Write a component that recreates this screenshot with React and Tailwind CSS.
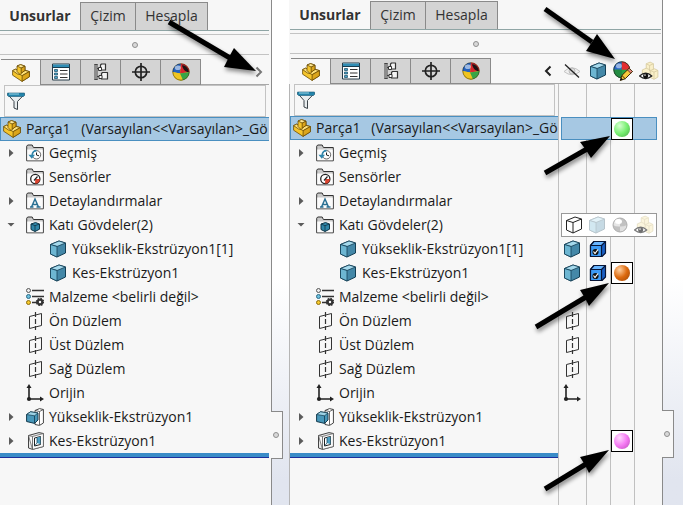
import React from 'react';
import clsx from 'clsx';

const Icon = ({ size = 'size-[18px]', className, children }) => (
  <svg viewBox="0 0 18 18" className={clsx(size, 'shrink-0', className)} fill="none" aria-hidden="true">
    {children}
  </svg>
);

const PartIcon = ({ className }) => (
  <Icon className={className}>
    <g stroke="#6b4d08" strokeWidth=".8" strokeLinejoin="round">
      <path d="M.6 6.600 3.500 5.200 5 5.800V2L8.600.600 13 2.200V6.200L17.400 7.600V12.800L10 17.400.6 11.200Z" fill="#f5c52c" />
      <path d="M5 2 8.600.600 13 2.200 9.200 4Z" fill="#ffe994" />
      <path d="M9.200 9.200 13 6.400 17.400 7.600 10.200 11.600 8 10.500Z" fill="#ffe27a" />
      <path d="M.6 6.600 3.500 5.200 5 5.800V7.500L8 10.500 5.500 10Z" fill="#ffe27a" />
      <path d="M9.200 4 13 2.200V6.400L9.200 9.200Z" fill="#dba51c" />
      <path d="M10.200 11.600 17.400 7.600V12.800L10 17.400Z" fill="#dba51c" />
    </g>
  </Icon>
);

const CubeIcon = ({ className }) => (
  <Icon className={className}>
    <g stroke="#143f55" strokeLinejoin="round">
      <path d="M1.500 4.500 10 1 16.500 3V13L8 17 1.500 14Z" fill="#4488a8" />
      <path d="M1.500 4.500 10 1 16.500 3 8 6.500Z" fill="#a5d9ec" strokeWidth=".8" />
      <path d="M1.500 4.500 8 6.500V17L1.500 14Z" fill="#6db6d2" strokeWidth=".8" />
    </g>
  </Icon>
);

const WireCubeIcon = () => (
  <Icon>
    <path d="M1.500 4.500 10 1 16.500 3V13L8 17 1.500 14ZM1.500 4.500 8 6.500 16.500 3M8 6.500V17" fill="#fff" stroke="#222" strokeLinejoin="round" />
  </Icon>
);

const CheckedCubeIcon = () => (
  <Icon>
    <g stroke="#071536" strokeWidth="1.200" strokeLinejoin="round">
      <path d="M1.500 5.500 5 1.500H16.500V13L13 16.500H1.500Z" fill="#1a5fc4" />
      <path d="M1.500 5.500 5 1.500H16.500L12.500 5.500Z" fill="#69b5ff" />
      <path d="M1.500 5.500H12.500V16.500H1.500Z" fill="#3d9af5" />
    </g>
    <circle cx="6.500" cy="12" r="3.100" fill="#111" />
    <path d="m4.500 11.500 1.500 2 3-4" stroke="#fff" strokeWidth="1.200" />
  </Icon>
);

const ListIcon = () => (
  <Icon>
    <path d="M.500 1h17v16H.500Z" fill="#fff" stroke="#263c4a" />
    <path d="M1 1.500h16v2.500H1Z" fill="#2f8db5" />
    <path d="M.500 4.500h17" stroke="#173b4e" />
    <path d="M2.500 6.500h3v2h-3ZM2.500 10h3v2h-3ZM2.500 13.500h3v2h-3Z" fill="#4aa4c8" stroke="#174761" strokeWidth=".7" />
    <path d="M8 7.500h7.500M8 11h7.500M8 14.500h7.500" stroke="#333" />
  </Icon>
);

const ConfigIcon = () => (
  <Icon>
    <path d="M3 1v16M5 1v16M2.500 1.500h3M2.500 16.500h3M5 5.500h4M5 13.500h4" stroke="#444" />
    <path d="M8.500 2 9.500 1H13.500V7H8.500ZM9.500 10.500 10.500 9.500H15.500V16H9.500Z" fill="#f4f4f4" stroke="#333" strokeWidth="1.200" strokeLinejoin="round" />
    <path d="M6.500 4.500h3v3h-3ZM7 12.500h3v3H7Z" fill="#fff" stroke="#333" />
  </Icon>
);

const TargetIcon = () => (
  <Icon>
    <circle cx="9" cy="9" r="5.700" stroke="#222" strokeWidth="1.700" />
    <path d="M9 0v18M0 9h18" stroke="#222" strokeWidth="1.700" />
  </Icon>
);

const AppearanceIcon = () => (
  <Icon>
    <circle cx="9" cy="9" r="8.500" fill="#f1c51e" />
    <path d="M9 .500A8.500 8.500 0 0 0 .500 9L8 10.500Z" fill="#2563bd" />
    <path d="M9 .500A8.500 8.500 0 0 1 17.500 9L8 10.500Z" fill="#d8262e" />
    <path d="M.500 9A8.500 8.500 0 0 0 8 17.400V10.500Z" fill="#f1c51e" />
    <path d="M8 10.500 17.500 9A8.500 8.500 0 0 1 8 17.400Z" fill="#37a545" />
    <path d="M8 10.500 11 17.200A8.500 8.500 0 0 1 2 14Z" fill="#f1c51e" />
    <circle cx="9" cy="9" r="8.200" stroke="#222" strokeOpacity=".65" strokeWidth=".7" />
    <ellipse cx="5.800" cy="4.800" rx="3" ry="2.300" fill="#fff" fillOpacity=".55" />
    <path d="M10 2.500C12.500 1.500 16.500 5 16.800 9 14 9.500 11 6.500 10 2.500Z" fill="#1d1415" />
  </Icon>
);

const EditAppearanceIcon = () => (
  <Icon size="size-5">
    <g transform="scale(.88)">
      <circle cx="9" cy="9" r="8.500" fill="#27a343" />
      <path d="M9 .500A8.500 8.500 0 0 0 .500 9H9Z" fill="#2a68c8" />
      <path d="M9 .500A8.500 8.500 0 0 1 17.500 9H9Z" fill="#e22c31" />
      <path d="M.500 9A8.500 8.500 0 0 0 9 17.500V9Z" fill="#238b42" />
      <circle cx="9" cy="9" r="8.200" stroke="#222" strokeWidth=".7" />
      <ellipse cx="6" cy="5" rx="3" ry="2.500" fill="#fff" fillOpacity=".5" />
    </g>
    <path d="M6.500 17.500 8 13 14.500 6.500 17.500 9.500 11 16Z" fill="#f7c93c" stroke="#3b2a05" strokeWidth=".9" />
    <path d="M6.500 17.500 7.300 15 9 16.600Z" fill="#111" />
    <path d="m8 13 3 3" stroke="#3b2a05" strokeWidth=".9" />
    <path d="m13 8 3 3 1.500-1.500-3-3Z" fill="#e88683" stroke="#3b2a05" strokeWidth=".7" />
  </Icon>
);

const GrayBallIcon = () => (
  <Icon className="opacity-60">
    <circle cx="9" cy="9" r="7" fill="#999" />
    <path d="M9 2A7 7 0 0 0 2 9Q5 11 9 10.500Z" fill="#d5d5d5" />
    <path d="M9 10.500Q13 10.500 16 9A7 7 0 0 1 9 16Z" fill="#ccc" />
    <circle cx="9" cy="9" r="7" stroke="#777" />
    <ellipse cx="7.500" cy="5.500" rx="3.500" ry="2.500" fill="#fff" />
  </Icon>
);

const HiddenIcon = () => (
  <Icon>
    <path d="M1 9.500Q9 2 17 9.500 9 16 1 9.500Z" fill="#f0f0f0" stroke="#c4c4c4" />
    <circle cx="9" cy="9" r="3" fill="#ddd" stroke="#bbb" />
    <path d="m2 2.500 14 13" stroke="#222" strokeWidth="1.300" />
  </Icon>
);

const TransparencyIcon = () => (
  <Icon size="size-5">
    <g fill="#faf0c8" stroke="#d8ccA4" strokeWidth=".8" strokeLinejoin="round">
      <path d="M6.500 2.500 10 1 13 2.500V8L9.500 9.500 6.500 8Z" />
      <path d="M10.500 8.500 14 7 17 8.500V14.500L13.500 16.500 10.500 15Z" />
      <path d="M3 8 6.500 6.500 10 8V14H3Z" />
      <path d="m6.500 2.500 3 1.500 3.500-1.500M9.500 4v5M10.500 8.500l3 1.500 3.500-1.500M13.500 10v6" />
    </g>
    <path d="M.500 13.500Q6 8.500 11.500 13.500 6 18 .500 13.500Z" fill="#fff" stroke="#222" strokeWidth="1.100" />
    <circle cx="6" cy="13.300" r="2.300" fill="#111" />
    <circle cx="5.400" cy="12.700" r=".7" fill="#fff" />
  </Icon>
);

const FunnelIcon = () => (
  <Icon>
    <path d="M.800 2.500 7 9.500V16l3.500 1.500v-8l6.700-7Z" fill="#e9edef" stroke="#3b4348" strokeLinejoin="round" />
    <path d="M.500 1h17v2.500l-1 1h-15l-1-1Z" fill="#2384ab" stroke="#185873" strokeWidth=".6" />
    <path d="M2 2h10" stroke="#9bd5e8" />
  </Icon>
);

const Folder = ({ children }) => (
  <Icon>
    <path d="M.700 16.800V2.200L1.700 1H6.200L7.400 3.500H17.300V16.800Z" fill="#c9c9c9" stroke="#333" />
    <path d="M1.200 5.500h15.600v10.800H1.200Z" fill="#fbfbfb" />
    {children}
  </Icon>
);

const HistoryIcon = () => (
  <Folder>
    <circle cx="10.500" cy="10.800" r="4.200" fill="#fff" stroke="#666" />
    <path d="M10.500 8.500v2.500l2.500.800" stroke="#222" />
    <path d="M10.500 6.600A4.200 4.200 0 0 0 6.300 10.800" stroke="#2f86ad" strokeWidth="1.800" />
    <path d="M2.500 10.800H9L5.800 14.800Z" fill="#2f86ad" />
  </Folder>
);

const SensorIcon = () => (
  <Folder>
    <circle cx="9.300" cy="11" r="4.600" fill="#fff" stroke="#222" strokeWidth="1.300" />
    <path d="M9.300 11h4.700a4.600 4.600 0 0 1-5 4.600Z" fill="#d9412c" />
    <path d="m8 12.500 3.500-4" stroke="#222" strokeWidth="1.200" />
  </Folder>
);

const AnnotationIcon = () => (
  <Folder>
    <path d="M5.500 15 9 7l3.500 8M6.500 12.500h5M4 15h3.500M10.500 15h4" stroke="#286f92" strokeWidth="1.500" />
  </Folder>
);

const BodiesIcon = () => (
  <Folder>
    <path d="M5 8 9.500 6.500 13.500 8V13.200L9 15.500 5 13.500Z" fill="#2f86a8" stroke="#0f3546" />
    <path d="m5 8 4 1.700L13.500 8M9 9.500V15.500" stroke="#0f3546" strokeWidth=".8" />
  </Folder>
);

const MaterialIcon = () => (
  <Icon>
    <path d="M6 2.500h12M6 8.500h12M6 14.500h5" stroke="#333" strokeWidth="1.600" />
    <circle cx="2.500" cy="2.500" r="2" fill="#eee" stroke="#555" />
    <circle cx="2.500" cy="8.500" r="2" fill="#6cc0de" stroke="#2c6b85" />
    <circle cx="2.500" cy="14.500" r="2" fill="#f7c92a" stroke="#8c6c0d" />
    <circle cx="14" cy="14" r="2.300" stroke="#333" strokeWidth="2.200" />
    <circle cx="14" cy="14" r="3.500" stroke="#333" strokeWidth="1.400" strokeDasharray="1.400 1.350" />
  </Icon>
);

const PlaneIcon = () => (
  <Icon>
    <path d="M3.500 4.500 15.500 1.500V13.500L3.500 16.500Z" stroke="#333" />
    <path d="M9.500 0v18" stroke="#333" strokeWidth="1.200" strokeDasharray="5 2" />
  </Icon>
);

const OriginIcon = () => (
  <Icon>
    <path d="M3 3v12h13" stroke="#222" strokeWidth="1.600" />
    <path d="M.5 4 3 0 5.500 4ZM14 12.500l4 2.500-4 2.500Z" fill="#222" />
    <circle cx="3" cy="15" r="2.100" fill="#222" />
  </Icon>
);

const ExtrudeIcon = () => (
  <Icon>
    <path d="M9 2.500 13.500.6 17.400 1.500V15L13.500 17.400 9 16.500Z" fill="#fff" stroke="#444" strokeLinejoin="round" />
    <path d="M13.500 3.500v13.500M9 2.500l4.500 1 3.900-2" stroke="#444" strokeWidth=".8" />
    <path d="M.6 6.500 4.500 3.800 12 5V12L8.500 15.400.6 13.500Z" fill="#4797b9" stroke="#12394c" strokeLinejoin="round" />
    <path d="M.6 6.500 4.500 3.800 12 5 8.500 7.800Z" fill="#9dd3e6" stroke="#12394c" strokeWidth=".7" />
    <path d="M8.500 7.800V15.400" stroke="#12394c" strokeWidth=".8" />
  </Icon>
);

const CutIcon = () => (
  <Icon>
    <path d="M2.500 3.500 13 .6 17.400 1.500V14.500L6.500 17.400 2.500 16Z" fill="#e8e8e8" stroke="#444" strokeLinejoin="round" />
    <path d="M2.500 3.500 6.500 4.500 17.400 1.500V14.500L6.500 17.400Z" fill="#fafafa" stroke="#555" strokeWidth=".7" />
    <path d="M6.500 4.500V17.400" stroke="#555" strokeWidth=".8" />
    <path d="M8.500 6 14.500 4.500V12.500L8.500 14Z" fill="#fff" stroke="#222" />
    <path d="M11 5.500 14.500 4.700V12.300L11 11Z" fill="#4b9fc4" />
    <path d="M8.500 14 11 11V5.500" stroke="#174b66" strokeWidth=".8" />
  </Icon>
);

const rows = [
  { label: 'Geçmiş', icon: HistoryIcon, toggle: 'closed' },
  { label: 'Sensörler', icon: SensorIcon },
  { label: 'Detaylandırmalar', icon: AnnotationIcon, toggle: 'closed' },
  { label: 'Katı Gövdeler(2)', icon: BodiesIcon, toggle: 'open' },
  { label: 'Yükseklik-Ekstrüzyon1[1]', icon: CubeIcon, child: true, display: CubeIcon, mode: true },
  { label: 'Kes-Ekstrüzyon1', icon: CubeIcon, child: true, display: CubeIcon, mode: true, color: 'orange' },
  { label: 'Malzeme <belirli değil>', icon: MaterialIcon },
  { label: 'Ön Düzlem', icon: PlaneIcon, display: PlaneIcon },
  { label: 'Üst Düzlem', icon: PlaneIcon, display: PlaneIcon },
  { label: 'Sağ Düzlem', icon: PlaneIcon, display: PlaneIcon },
  { label: 'Orijin', icon: OriginIcon, display: OriginIcon },
  { label: 'Yükseklik-Ekstrüzyon1', icon: ExtrudeIcon, toggle: 'closed' },
  { label: 'Kes-Ekstrüzyon1', icon: CutIcon, toggle: 'closed', color: 'pink' },
];

const swatches = {
  green: 'from-[#d5ffd0] via-[#78ef72] to-[#4aa846]',
  orange: 'from-[#ffd0a0] via-[#dc690e] to-[#9a4404]',
  pink: 'from-[#ffdcff] via-[#f57af3] to-[#b84bb6]',
};

const Swatch = ({ color }) => (
  <button aria-label={color} className="flex size-[22px] shrink-0 items-center justify-center border border-black bg-white">
    <span className={clsx('size-4 rounded-full bg-radial-[at_35%_30%]', swatches[color])} />
  </button>
);

const Toggle = ({ state }) => (
  <span className={clsx('flex w-5 shrink-0', state === 'open' ? 'pl-px' : 'pl-[3px]')}>
    {state && (
      <svg viewBox="0 0 8 8" className="size-2" aria-hidden="true">
        <path d={state === 'open' ? 'M.5 2h7L4 5.500Z' : 'M0 0 4.500 4 0 8Z'} fill="#5b5b5b" />
      </svg>
    )}
  </span>
);

const TreeRow = ({ row }) => {
  const RowIcon = row.icon;
  return (
    <li>
      <button className={clsx('flex h-6 w-full items-center whitespace-nowrap', row.child ? 'pl-[49px]' : 'pl-[6px]')}>
        {!row.child && <Toggle state={row.toggle} />}
        <RowIcon />
        <span className="pl-[5px]">{row.label}</span>
      </button>
    </li>
  );
};

const Tree = () => (
  <>
    <ul>
      {rows.map((row, i) => <TreeRow key={i} row={row} />)}
    </ul>
    <div className="h-[5px] border-b border-[#1d2f9c] bg-[#3a8cc8]" />
  </>
);

const RootRow = () => (
  <button className="flex h-6 w-full items-center border-y border-l border-[#4a8fc0] bg-[#a6c8e3] pl-[2px] whitespace-pre">
    <PartIcon />
    <span className="pl-[5px]">{'Parça1   (Varsayılan<<Varsayılan>_Gö'}</span>
  </button>
);

const Filter = () => (
  <label className="mr-[3px] ml-1 flex h-8 items-center border border-[#c3c3c3] pl-[2px]">
    <FunnelIcon />
    <input aria-label="Filter" className="ml-1 h-6 w-full min-w-0 bg-transparent outline-none" />
  </label>
);

const RibbonTabs = () => (
  <div className="flex h-[29px] border-b border-[#8fa5a5]">
    <button className="w-20 shrink-0 pb-px font-bold text-[#333]">Unsurlar</button>
    <button className="w-14 shrink-0 border border-b-0 border-[#8a8a8a] bg-[#d4d4d4] pb-px text-[#333]">Çizim</button>
    <button className="w-[72px] shrink-0 border border-b-0 border-l-0 border-[#8a8a8a] bg-[#d4d4d4] pb-px text-[#333]">Hesapla</button>
  </div>
);

const Dot = () => <span className="size-[6px] rounded-full border border-[#8f8f8f] bg-[#d8d8d8]" />;

const Splitter = () => (
  <div className="mt-[3px] flex h-[21px] items-center justify-center border-y border-[#c3c3c3]">
    <Dot />
  </div>
);

const managerTabs = [
  { name: 'Part', icon: PartIcon },
  { name: 'Properties', icon: ListIcon },
  { name: 'Configurations', icon: ConfigIcon },
  { name: 'Dimensions', icon: TargetIcon },
  { name: 'Appearances', icon: AppearanceIcon },
];

const ManagerBar = ({ children }) => (
  <div className="mt-1 flex h-[26px] pl-px">
    {managerTabs.map(({ name, icon: TabIcon }, i) => (
      <button
        key={name}
        aria-label={name}
        className={clsx(
          'flex w-10 shrink-0 items-center justify-center border-t border-r border-[#8a8a8a]',
          i > 0 && 'border-b bg-[#d4d4d4]'
        )}
      >
        <TabIcon />
      </button>
    ))}
    <div className="flex flex-1 items-center justify-end border-b border-[#a8a8a8]">{children}</div>
  </div>
);

const Chevron = ({ left }) => (
  <button aria-label={left ? 'Collapse' : 'Expand'}>
    <svg viewBox="0 0 8 12" className="h-3 w-2" fill="none">
      <path d={left ? 'M6.500 1.500 2 6 6.500 10.500' : 'M1.500 1.500 6 6 1.500 10.500'} stroke={left ? '#222' : '#777'} strokeWidth="2" />
    </svg>
  </button>
);

const Canvas = ({ className }) => (
  <div className={clsx('shrink-0 border-l border-[#8a8a8a] bg-linear-to-b from-white from-55% to-[#e1e5ef] to-95%', className)}>
    <button aria-label="Resize panel" className="-ml-px flex h-12 w-3 items-center justify-center border border-l-0 border-[#8a8a8a] bg-[#f7f7f7] pr-px">
      <Dot />
    </button>
  </div>
);

// Cells share the widths of the four display pane columns
const columns = ['w-7', 'w-6', 'w-6', 'w-7'];

const DisplayRow = ({ row }) => {
  const DisplayIcon = row.display;
  return (
    <div className="flex h-6 items-center">
      <div className={clsx(columns[0], 'flex shrink-0 justify-center')}>{DisplayIcon && <DisplayIcon />}</div>
      <div className={clsx(columns[1], 'flex shrink-0 justify-center')}>{row.mode && <CheckedCubeIcon />}</div>
      <div className={clsx(columns[2], 'flex shrink-0 justify-center')}>{row.color && <Swatch color={row.color} />}</div>
    </div>
  );
};

const DisplayPane = () => (
  <div className="relative w-[103px] shrink-0">
    <div className="absolute inset-0 flex">
      {columns.map((width, i) => (
        <div key={i} className={clsx(width, 'border-l border-[#c0c0c0]', i < 3 && 'shrink-0')} />
      ))}
    </div>
    <div className="relative pt-[33px]">
      <div className="mr-1 ml-[3px] flex h-[23px] items-center justify-center border border-[#4a8fc0] bg-[#a6c8e3] pl-[26px]">
        <Swatch color="green" />
      </div>
      <div className="pt-px">
        {rows.map((row, i) =>
          row.toggle === 'open' ? (
            <div key={i} className="mr-1 ml-[3px] flex h-6 items-center justify-around border border-[#999] bg-white">
              <WireCubeIcon />
              <CubeIcon className="opacity-30" />
              <GrayBallIcon />
              <span className="opacity-60"><TransparencyIcon /></span>
            </div>
          ) : (
            <DisplayRow key={i} row={row} />
          )
        )}
      </div>
    </div>
  </div>
);

const arrows = [
  { tail: [169, 22], neck: [230, 58], head: '234,48 256,71 224,67 229,57' },
  { tail: [545, 9], neck: [592, 42], head: '597,34 615,59 586,51 592,42' },
  { tail: [545, 173], neck: [587, 149], head: '580,142 610,136 591,158 586,150' },
  { tail: [536, 327], neck: [586, 297], head: '580,290 609,283 589,306 585,298' },
  { tail: [545, 489], neck: [586, 464], head: '580,457 609,450 589,473 585,465' },
];

const Arrows = () => (
  <svg className="pointer-events-none absolute top-0 left-0 h-[505px] w-[683px] drop-shadow-[1px_3px_2px_rgba(0,0,0,0.45)]" viewBox="0 0 683 505" aria-hidden="true">
    {arrows.map(({ tail, neck, head }) => (
      <g key={head}>
        <line x1={tail[0]} y1={tail[1]} x2={neck[0]} y2={neck[1]} stroke="#000" strokeWidth="5" />
        <polygon points={head} />
      </g>
    ))}
  </svg>
);

export default function App() {
  return (
    <main className="relative flex min-h-screen overflow-hidden bg-white font-['Open_Sans','Noto_Sans',sans-serif] text-[14px] leading-5 text-[#1a1a1a]">
      <section className="flex min-w-0 flex-[289]">
        <div className="min-w-0 flex-1 overflow-hidden bg-[#f7f7f7] pt-[2px] pr-[2px]">
          <RibbonTabs />
          <Splitter />
          <ManagerBar>
            <span className="flex pr-[6px]"><Chevron /></span>
          </ManagerBar>
          <Filter />
          <RootRow />
          <Tree />
        </div>
        <Canvas className="w-[18px] pt-[411px]" />
      </section>

      <section className="flex min-w-0 flex-[394]">
        <div className="flex min-w-0 flex-1 flex-col bg-[#f7f7f7] pt-px pr-px">
          <div className="pl-px">
            <RibbonTabs />
            <Splitter />
            <ManagerBar>
              <Chevron left />
              <button aria-label="Hide/Show" className="ml-[11px]"><HiddenIcon /></button>
              <button aria-label="Display mode" className="ml-2"><CubeIcon /></button>
              <button aria-label="Appearance" className="ml-[6px]"><EditAppearanceIcon /></button>
              <button aria-label="Transparency" className="mr-[2px] ml-[6px]"><TransparencyIcon /></button>
            </ManagerBar>
          </div>
          <div className="flex flex-1">
            <div className="min-w-0 flex-1 overflow-hidden border-l border-[#b5b5b5]">
              <Filter />
              <RootRow />
              <div className="pt-px">
                <Tree />
              </div>
            </div>
            <DisplayPane />
          </div>
        </div>
        <Canvas className="w-[21px] pt-[410px]" />
      </section>

      <Arrows />
    </main>
  );
}
